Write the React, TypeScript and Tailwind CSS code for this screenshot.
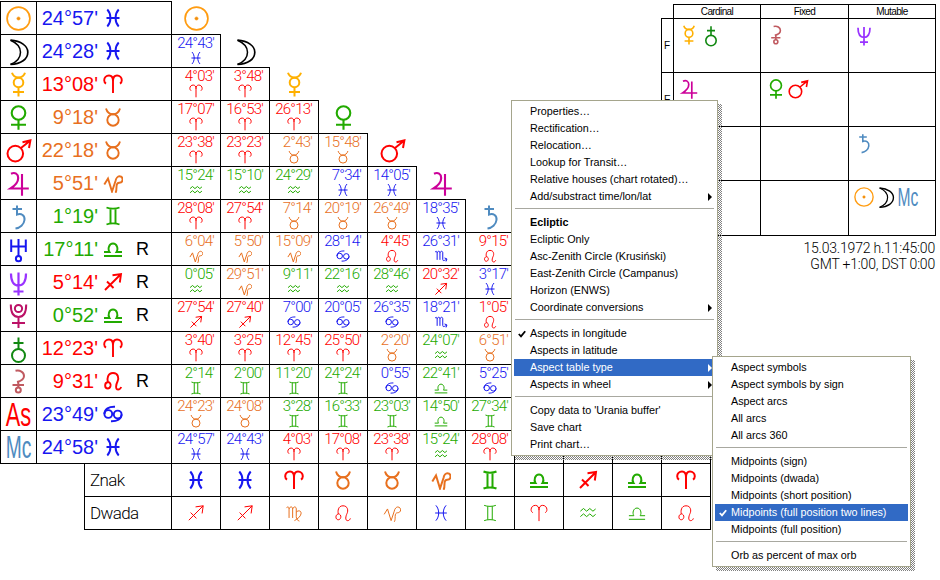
import React from "react";

type SignName = "ar" | "ta" | "ge" | "cn" | "le" | "vi" | "li" | "sc" | "sg" | "cp" | "aq" | "pi";
type PlanetName = "sun" | "moon" | "mercury" | "venus" | "mars" | "jupiter" | "saturn" | "uranus" | "neptune" | "pluto" | "earth" | "chiron" | "as" | "mc";

const FIRE = "#ff0000";
const EARTH = "#e8701e";
const AIR = "#22aa00";
const WATER = "#1717f0";

const signColor: Record<SignName, string> = {
  ar: FIRE, le: FIRE, sg: FIRE,
  ta: EARTH, vi: EARTH, cp: EARTH,
  ge: AIR, li: AIR, aq: AIR,
  cn: WATER, sc: WATER, pi: WATER,
};

const signPaths: Record<SignName, React.ReactNode> = {
  ar: <path d="M10 19V7C10 3.5 8.5 1.5 6 1.5C3.2 1.5 1.2 3.6 1.2 6.3C1.2 7.8 1.9 8.9 3 9.6M10 7C10 3.5 11.5 1.5 14 1.5C16.8 1.5 18.8 3.6 18.8 6.3C18.8 7.8 18.1 8.9 17 9.6" />,
  ta: <><circle cx="10" cy="13" r="5.7" /><path d="M3 1.5C4 5 6.5 7.2 10 7.2C13.5 7.2 16 5 17 1.5" /></>,
  ge: <path d="M3.5 1.5C7 3 13 3 16.5 1.5M3.5 18.5C7 17 13 17 16.5 18.5M7.5 2.6V17.4M12.5 2.6V17.4" />,
  cn: <><circle cx="5.3" cy="10" r="3.9" /><path d="M1.4 10C1.5 5 6 2.5 12 2.8" /><circle cx="14.7" cy="10.5" r="3.9" /><path d="M18.6 10.5C18.5 15 14 17.5 8 17.3" /></>,
  le: <path d="M4.8 17.5C1.5 17.5 1 12 4.8 11C6.8 11 8 13 7.5 15C7 16.8 6 17.5 4.8 17.5M4.8 11C4 8 4.5 2 10 2C15.5 2 16 7.5 14.5 10.5C13 13.5 12 18.5 15.2 18.5C16.7 18.5 17.6 17.5 18.2 16" />,
  vi: <path d="M1.5 4.5C3 2.5 4.5 3 4.5 5.5V15.5M4.5 5.5C5.5 2.5 8.5 2.5 8.5 5.5V15.5M8.5 5.5C9.5 2.5 12.5 2.5 12.5 5.5V14C12.5 17 14 18.2 16 19M12.5 9C15 6.5 18.5 7.5 17.8 11C17.2 14 14 16.5 10.5 18.5" />,
  li: <path d="M1 17H19M1 13H6.5C4.5 10 6 4.5 10 4.5C14 4.5 15.5 10 13.5 13H19" />,
  sc: <path d="M1.5 4.5C3 2.5 4.5 3 4.5 5.5V15.5M4.5 5.5C5.5 2.5 8.5 2.5 8.5 5.5V15.5M8.5 5.5C9.5 2.5 12.5 2.5 12.5 5.5V15C12.5 17.2 14.5 17 18 14.5M15 12.8L18.5 14.2L17.2 17.8" />,
  sg: <path d="M2 18L18 2M9.5 3.2L18 2L16.8 10.5M4 9.5L10.5 16" />,
  cp: <path d="M1.3 11.5L5 5.5L9 18.5L12.5 8C13 5 15 3.3 16.3 3.3C18.5 3.3 19.6 5 19.6 6.5C19.6 8.5 18 9.7 16.3 9.7C14.5 9.7 13.5 11 13.5 14C13.5 16.5 13.5 18.5 12.5 19.8" />,
  aq: <path d="M1.5 8L5 5L8.5 8L12 5L15.5 8L18.5 5.5M1.5 14L5 11L8.5 14L12 11L15.5 14L18.5 11.5" />,
  pi: <path d="M4.3 1.5C8.5 6 8.5 14 4.3 18.5M15.7 1.5C11.5 6 11.5 14 15.7 18.5M3.5 10H16.5" />,
};

function Sign({ name, size, sw }: { name: SignName; size: number; sw: number }) {
  return (
    <svg width={size} height={size} viewBox="0 0 20 20" fill="none" stroke={signColor[name]} strokeWidth={sw * (20 / size)} className="block shrink-0">
      {signPaths[name]}
    </svg>
  );
}

const planetArt: Record<Exclude<PlanetName, "as" | "mc">, React.ReactNode> = {
  sun: <g stroke="#ff9c11"><circle cx="12.5" cy="12.5" r="11.4" strokeWidth="1.7" /><circle cx="12.5" cy="12.5" r="1.6" fill="#ee8c11" strokeWidth="0.6" /></g>,
  moon: <g stroke="#000"><path d="M4.5 1.2C15 2 21.8 7 21.8 13.2C21.8 20 15 25.2 4.5 25.4" strokeWidth="1.7" /><path d="M4.5 1.2C11 4 14.5 8.8 14.5 13.2C14.5 18.5 11 22.8 4.5 25.4" strokeWidth="1.5" /></g>,
  mercury: <g stroke="#ffb000" strokeWidth="2"><path d="M6 0.8C7 4 9.5 5.5 12.5 5.5C15.5 5.5 18 4 19 0.8" /><circle cx="12.5" cy="10.5" r="4.8" /><path d="M12.5 15.3V24.5M7 20H18" /></g>,
  venus: <g stroke="#22aa00" strokeWidth="2.1"><circle cx="12.5" cy="8" r="6.8" /><path d="M12.5 14.8V24.8M5 19.8H20" /></g>,
  mars: <g stroke="#ff0000" strokeWidth="2"><circle cx="9.3" cy="15.6" r="7.8" /><path d="M15 10L24 2.8M16.5 4.2L24.4 2.4L23 10" /></g>,
  jupiter: <g stroke="#cc0099" strokeWidth="2.1"><path d="M5 2.8C9 0.8 12.2 3 12.2 7C12.2 11 8.5 15 4.5 17.5H22.8M16 3V24.8" /></g>,
  saturn: <g stroke="#4f8bc0" strokeWidth="2"><path d="M6.5 5H16M11 1.5V10.5C15.5 9 19 11.5 18.5 16C18 20.5 14 23.8 9.5 24.5" /></g>,
  uranus: <g stroke="#1717f0" strokeWidth="2"><path d="M5.2 2.5V15M19.8 2.5V15M5.2 9.5H19.8M12.5 2V19" /><circle cx="12.5" cy="21.7" r="2.6" /></g>,
  neptune: <g stroke="#9933ff" strokeWidth="2.2"><path d="M5 3.5C5 12 8 15.5 12.5 15.5C17 15.5 20 12 20 3.5M12.5 2.5V25.5M7.5 21.5H17.5" /></g>,
  pluto: <g stroke="#bb1166" strokeWidth="2"><path d="M4.8 1.5C4.8 10.5 8 14 12.5 14C17 14 20.2 10.5 20.2 1.5M12.5 14V25M6 20H19" /><circle cx="12.5" cy="5.5" r="3.6" /></g>,
  earth: <g stroke="#118811" strokeWidth="2"><circle cx="12.5" cy="19.5" r="6.5" /><path d="M12.5 1.5V13M7.5 7H17.5" /></g>,
  chiron: <g stroke="#c05a60" strokeWidth="2"><path d="M9.5 1.8C14 0.8 18 3 18 7C18 10.8 14.5 12.2 11 13M12.3 12.5V18.5M6.5 16H18" /><circle cx="12.3" cy="21" r="2.5" /></g>,
};

function Planet({ name, size }: { name: PlanetName; size: number }) {
  if (name === "as") {
    return (
      <span className="flex h-[25px] w-[25px] items-center justify-center font-['Liberation_Sans',sans-serif] text-[33px] leading-none whitespace-nowrap text-[#ff0000] scale-x-[0.66]">
        As
      </span>
    );
  }
  if (name === "mc") {
    return size >= 25 ? (
      <span className="flex h-[25px] w-[25px] items-center justify-center font-['Liberation_Sans',sans-serif] text-[32px] leading-none whitespace-nowrap text-[#4f8bc0] scale-x-[0.6]">
        Mc
      </span>
    ) : (
      <span className="flex h-[20px] w-[20px] items-center justify-center font-['Liberation_Sans',sans-serif] text-[26px] leading-none whitespace-nowrap text-[#4f8bc0] scale-x-[0.6]">
        Mc
      </span>
    );
  }
  return (
    <svg width={size} height={size} viewBox="0 0 25 25" fill="none" className="block shrink-0 overflow-visible">
      {planetArt[name]}
    </svg>
  );
}

const rows: { p: PlanetName; v: string; s: SignName; r?: boolean; mids: [string, SignName][] }[] = [
  { p: "sun", v: "24°57'", s: "pi", mids: [] },
  { p: "moon", v: "24°28'", s: "pi", mids: [["24°43'", "pi"]] },
  { p: "mercury", v: "13°08'", s: "ar", mids: [["4°03'", "ar"], ["3°48'", "ar"]] },
  { p: "venus", v: "9°18'", s: "ta", mids: [["17°07'", "ar"], ["16°53'", "ar"], ["26°13'", "ar"]] },
  { p: "mars", v: "22°18'", s: "ta", mids: [["23°38'", "ar"], ["23°23'", "ar"], ["2°43'", "ta"], ["15°48'", "ta"]] },
  { p: "jupiter", v: "5°51'", s: "cp", mids: [["15°24'", "aq"], ["15°10'", "aq"], ["24°29'", "aq"], ["7°34'", "pi"], ["14°05'", "pi"]] },
  { p: "saturn", v: "1°19'", s: "ge", mids: [["28°08'", "ar"], ["27°54'", "ar"], ["7°14'", "ta"], ["20°19'", "ta"], ["26°49'", "ta"], ["18°35'", "pi"]] },
  { p: "uranus", v: "17°11'", s: "li", r: true, mids: [["6°04'", "cp"], ["5°50'", "cp"], ["15°09'", "cp"], ["28°14'", "cn"], ["4°45'", "le"], ["26°31'", "sc"], ["9°15'", "le"]] },
  { p: "neptune", v: "5°14'", s: "sg", r: true, mids: [["0°05'", "aq"], ["29°51'", "cp"], ["9°11'", "aq"], ["22°16'", "aq"], ["28°46'", "aq"], ["20°32'", "sg"], ["3°17'", "pi"]] },
  { p: "pluto", v: "0°52'", s: "li", r: true, mids: [["27°54'", "sg"], ["27°40'", "sg"], ["7°00'", "cn"], ["20°05'", "cn"], ["26°35'", "cn"], ["18°21'", "sc"], ["1°05'", "le"]] },
  { p: "earth", v: "12°23'", s: "ar", mids: [["3°40'", "ar"], ["3°25'", "ar"], ["12°45'", "ar"], ["25°50'", "ar"], ["2°20'", "ta"], ["24°07'", "aq"], ["6°51'", "ta"]] },
  { p: "chiron", v: "9°31'", s: "le", r: true, mids: [["2°14'", "ge"], ["2°00'", "ge"], ["11°20'", "ge"], ["24°24'", "ge"], ["0°55'", "cn"], ["22°41'", "li"], ["5°25'", "cn"]] },
  { p: "as", v: "23°49'", s: "cn", mids: [["24°23'", "ta"], ["24°08'", "ta"], ["3°28'", "ge"], ["16°33'", "ge"], ["23°03'", "ge"], ["14°50'", "li"], ["27°34'", "ge"]] },
  { p: "mc", v: "24°58'", s: "pi", mids: [["24°57'", "pi"], ["24°43'", "pi"], ["4°03'", "ar"], ["17°08'", "ar"], ["23°38'", "ar"], ["15°24'", "aq"], ["28°08'", "ar"]] },
];

const znak: SignName[] = ["pi", "pi", "ar", "ta", "ta", "cp", "ge", "li", "sg", "li", "ar"];
const dwada: SignName[] = ["sg", "sg", "vi", "le", "cp", "pi", "ge", "ar", "aq", "li", "le"];

function MidCell({ value, sign, top }: { value: string; sign: SignName; top: boolean }) {
  return (
    <div className={"flex w-[49px] flex-col items-center border-r border-b border-black " + (top ? "-mt-px border-t" : "")}>
      <div className="w-full pt-px pr-[6px] text-right font-['Roboto',sans-serif] text-[15px] leading-[14px] font-light tracking-[-0.8px]" style={{ color: signColor[sign] }}>
        {value}
      </div>
      <div className="mt-px">
        <Sign name={sign} size={14} sw={1} />
      </div>
    </div>
  );
}

function Chart() {
  return (
    <div className="col-start-1 row-start-1 flex flex-col self-start pt-[2px]">
      {rows.map((row, r) => (
        <div key={r} className="flex h-[33px]">
          <div className={"flex w-[37px] items-center justify-center border-x border-b border-black " + (r === 0 ? "-mt-px border-t" : "")}>
            <Planet name={row.p} size={25} />
          </div>
          <div className={"flex w-[135px] items-center border-r border-b border-black " + (r === 0 ? "-mt-px border-t" : "")}>
            <span className="w-[61px] text-right font-['Liberation_Sans',sans-serif] text-[20px] leading-none" style={{ color: signColor[row.s] }}>
              {row.v}
            </span>
            <span className="ml-[5px]">
              <Sign name={row.s} size={20} sw={1.9} />
            </span>
            {row.r && <span className="ml-[13px] font-['Liberation_Sans',sans-serif] text-[18px] leading-none text-black">R</span>}
          </div>
          {row.mids.map(([value, sign], c) => (
            <MidCell key={c} value={value} sign={sign} top={c === r - 1} />
          ))}
          {r <= 6 && (
            <div className="flex w-[49px] items-center justify-center">
              <Planet name={row.p} size={25} />
            </div>
          )}
          {r === 13 && [0, 1, 2, 3].map((k) => <div key={k} className="w-[49px] border-r border-b border-black" />)}
        </div>
      ))}
      {[
        { label: "Znak", list: znak, size: 20, sw: 2 },
        { label: "Dwada", list: dwada, size: 18, sw: 1 },
      ].map((line) => (
        <div key={line.label} className="ml-[84px] flex h-[33px]">
          <div className="flex w-[88px] items-center border-x border-b border-black pl-[5px] font-['Roboto',sans-serif] text-[17px] leading-none font-light tracking-[-0.6px] text-black">
            {line.label}
          </div>
          {line.list.map((s, i) => (
            <div key={i} className="flex w-[49px] items-center justify-center border-r border-b border-black">
              <Sign name={s} size={line.size} sw={line.sw} />
            </div>
          ))}
        </div>
      ))}
    </div>
  );
}

const elementRows: { label: string; cells: PlanetName[][] }[] = [
  { label: "F", cells: [["mercury", "earth"], ["chiron"], ["neptune"]] },
  { label: "E", cells: [["jupiter"], ["venus", "mars"], []] },
  { label: "", cells: [[], [], ["saturn"]] },
  { label: "", cells: [[], [], ["sun", "moon", "mc"]] },
];

function ElementsTable() {
  return (
    <div className="col-start-1 row-start-1 flex flex-col self-start justify-self-end pt-[5px] pr-[4px] font-['Liberation_Sans',sans-serif] text-black">
      <div className="grid grid-cols-[13px_87px_88px_87px] grid-rows-[14px_54px_54px_54px_55px]">
        <div />
        {["Cardinal", "Fixed", "Mutable"].map((h, i) => (
          <div key={h} className={"-mt-px flex items-center justify-center border-t border-r border-b border-black text-[10px] leading-none tracking-[-0.6px] " + (i === 0 ? "-ml-px border-l" : "")}>
            {h}
          </div>
        ))}
        {elementRows.map((row, r) => (
          <React.Fragment key={r}>
            <div className={"flex items-center border-x border-b border-black pl-[2px] text-[10px] leading-none " + (r === 0 ? "-mt-px border-t" : "")}>
              {row.label}
            </div>
            {row.cells.map((cell, c) => (
              <div key={c} className="flex gap-[2px] border-r border-b border-black pt-[6px] pl-[5px]">
                {cell.map((p) => (
                  <Planet key={p} name={p} size={20} />
                ))}
              </div>
            ))}
          </React.Fragment>
        ))}
      </div>
      <div className="mt-[4px] pr-px text-right font-['Roboto',sans-serif] text-[14px] leading-[16px] font-light tracking-[-0.2px]">
        <div>15.03.1972 h.11:45:00</div>
        <div>GMT +1:00, DST 0:00</div>
      </div>
    </div>
  );
}

type Item = { label?: string; sep?: boolean; bold?: boolean; check?: boolean; arrow?: boolean; active?: boolean };

function Check({ color }: { color: string }) {
  return (
    <svg width="8" height="8" viewBox="0 0 8 8" fill="none" stroke={color} strokeWidth="1.8" className="block">
      <path d="M0.8 4L3 6.4L7.2 1.2" />
    </svg>
  );
}

function MenuPanel({ items, className }: { items: Item[]; className: string }) {
  return (
    <div className={"absolute " + className}>
      <div className="absolute top-[4px] right-[-4px] bottom-[-4px] left-[4px] bg-[repeating-conic-gradient(#808080_0_25%,transparent_0_50%)] bg-size-[2px_2px]" />
      <div className="relative h-full border border-[#a5a58c] bg-white p-[2px] font-['Liberation_Sans',sans-serif] text-[10.8px] text-black">
        {items.map((it, i) =>
          it.sep ? (
            <div key={i} className="flex h-[9px] items-start pt-[3px]">
              <div className="mx-px h-px w-full bg-[#a8a8a0]" />
            </div>
          ) : (
            <div key={i} className={"flex h-[17px] items-center leading-none " + (it.active ? "bg-[#316ac5] text-white" : "")}>
              <span className="flex w-[16px] shrink-0 justify-center pr-[1px]">{it.check && <Check color={it.active ? "#ffffff" : "#000000"} />}</span>
              <span className={(it.bold ? "font-bold " : "") + "whitespace-nowrap"}>{it.label}</span>
              {it.arrow && <span className={"mr-[3px] ml-auto h-0 w-0 border-y-[4px] border-l-[4px] border-y-transparent " + (it.active ? "border-l-white" : "border-l-black")} />}
            </div>
          ),
        )}
      </div>
    </div>
  );
}

const menuOne: Item[] = [
  { label: "Properties…" },
  { label: "Rectification…" },
  { label: "Relocation…" },
  { label: "Lookup for Transit…" },
  { label: "Relative houses (chart rotated)…" },
  { label: "Add/substract time/lon/lat", arrow: true },
  { sep: true },
  { label: "Ecliptic", bold: true },
  { label: "Ecliptic Only" },
  { label: "Asc-Zenith Circle (Krusiński)" },
  { label: "East-Zenith Circle (Campanus)" },
  { label: "Horizon (ENWS)" },
  { label: "Coordinate conversions", arrow: true },
  { sep: true },
  { label: "Aspects in longitude", check: true },
  { label: "Aspects in latitude" },
  { label: "Aspect table type", arrow: true, active: true },
  { label: "Aspects in wheel", arrow: true },
  { sep: true },
  { label: "Copy data to 'Urania buffer'" },
  { label: "Save chart" },
  { label: "Print chart…" },
];

const menuTwo: Item[] = [
  { label: "Aspect symbols" },
  { label: "Aspect symbols by sign" },
  { label: "Aspect arcs" },
  { label: "All arcs" },
  { label: "All arcs 360" },
  { sep: true },
  { label: "Midpoints (sign)" },
  { label: "Midpoints (dwada)" },
  { label: "Midpoints (short position)" },
  { label: "Midpoints (full position two lines)", check: true, active: true },
  { label: "Midpoints (full position)" },
  { sep: true },
  { label: "Orb as percent of max orb" },
];

export default function App() {
  return (
    <div className="relative grid h-[580px] w-[940px] grid-cols-1 grid-rows-1 overflow-hidden bg-white">
      <Chart />
      <ElementsTable />
      <MenuPanel items={menuOne} className="top-[100px] left-[511px] h-[356px] w-[207px]" />
      <MenuPanel items={menuTwo} className="top-[356px] left-[712px] h-[211px] w-[199px]" />
    </div>
  );
}
